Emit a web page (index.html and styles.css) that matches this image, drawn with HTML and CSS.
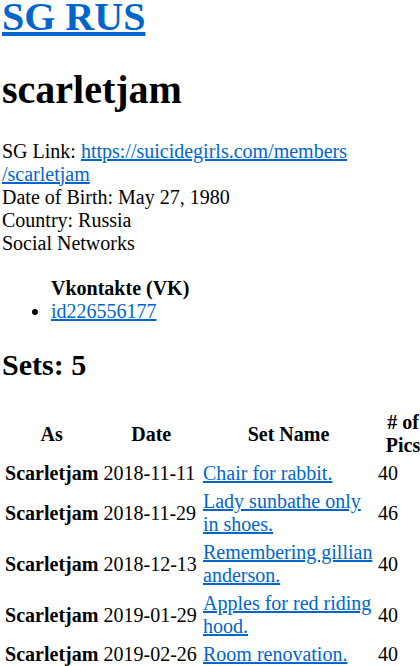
FILE: index.html
```html
<!DOCTYPE html>
<html lang="en">
<head>
  <meta charset="UTF-8" />
  <meta name="viewport" content="width=device-width, initial-scale=1.0"/>
  <title>scarletjam - SG RUS</title>
  <link rel="stylesheet" href="styles.css">
</head>
<body>
  <h1 class="site-title"><a href="#">SG RUS</a></h1>
  <h1>scarletjam</h1>
  <div class="info">
    SG Link: <a href="#">https://suicidegirls.com/members<wbr>/scarletjam</a><br>
    Date of Birth: May 27, 1980<br>
    Country: Russia<br>
    Social Networks
  </div>
  <ul class="networks">
    <b>Vkontakte (VK)</b>
    <li><a href="#">id226556177</a></li>
  </ul>
  <h2>Sets: 5</h2>
  <table class="sets">
    <thead>
      <tr>
        <th>As</th>
        <th>Date</th>
        <th class="name">Set Name</th>
        <th class="pics"># of Pics</th>
      </tr>
    </thead>
    <tbody>
      <tr>
        <th>Scarletjam</th>
        <td class="date">2018-11-11</td>
        <td><a href="#">Chair for rabbit.</a></td>
        <td>40</td>
      </tr>
      <tr>
        <th>Scarletjam</th>
        <td class="date">2018-11-29</td>
        <td><a href="#">Lady sunbathe only in shoes.</a></td>
        <td>46</td>
      </tr>
      <tr>
        <th>Scarletjam</th>
        <td class="date">2018-12-13</td>
        <td><a href="#">Remembering gillian anderson.</a></td>
        <td>40</td>
      </tr>
      <tr>
        <th>Scarletjam</th>
        <td class="date">2019-01-29</td>
        <td><a href="#">Apples for red riding hood.</a></td>
        <td>40</td>
      </tr>
      <tr>
        <th>Scarletjam</th>
        <td class="date">2019-02-26</td>
        <td><a href="#">Room renovation.</a></td>
        <td>40</td>
      </tr>
    </tbody>
  </table>
</body>
</html>
```

FILE: styles.css
```css
html {
  overflow-x: hidden;
}
body {
  margin: 0 0 0 2px;
  font-family: "Liberation Serif", "Times New Roman", serif;
  font-size: 20px;
  line-height: 1.15;
  color: #000;
  background: #fff;
}
a {
  color: #0066cc;
}
h1 {
  font-size: 40px;
  margin: 26.8px 0;
}
.site-title {
  margin-top: -6px;
}
h2 {
  font-size: 30px;
  margin: 25px 0;
}
.networks {
  margin: 22px 0 21px;
  padding-left: 49px;
}
.sets {
  width: 430px;
  margin-left: -1px;
  border-spacing: 2px 3px;
}
.sets th,
.sets td {
  padding: 1px;
}
.sets .date {
  white-space: nowrap;
}
.sets .name {
  width: 171px;
}
.sets .pics {
  width: 50px;
}
```
